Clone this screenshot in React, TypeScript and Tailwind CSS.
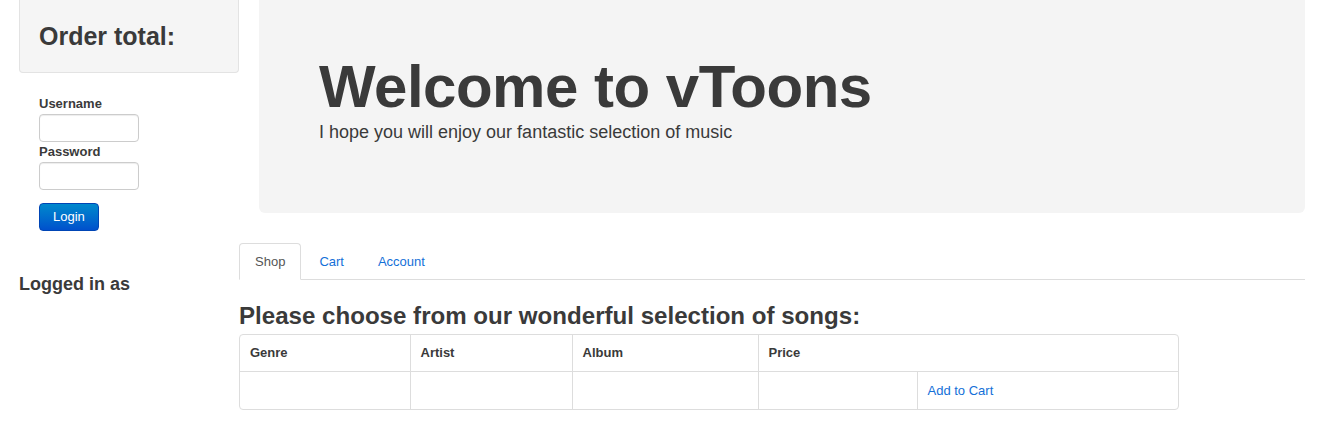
import React from 'react';

const font = { fontFamily: '"Liberation Sans", Arial, sans-serif' };

function Sidebar() {
  return (
    <div className="w-[220px] shrink-0">
      <div className="bg-[#f5f5f5] border border-t-0 border-[#e3e3e3] rounded-b-[4px] px-[19px] pt-[16px] pb-[16px]">
        <h3 className="text-[25px] leading-[40px] font-bold text-[#3a3a3a]">Order total:</h3>
      </div>

      <form className="pl-[20px] pt-[21px]">
        <label className="block text-[13px] leading-[20px] font-bold text-[#3a3a3a]">Username</label>
        <input className="block w-[100px] h-[28px] border border-[#ccc] rounded-[4px] bg-white shadow-[inset_0_1px_1px_rgba(0,0,0,0.075)]" />
        <label className="block text-[13px] leading-[20px] font-bold text-[#3a3a3a]">Password</label>
        <input type="password" className="block w-[100px] h-[28px] border border-[#ccc] rounded-[4px] bg-white shadow-[inset_0_1px_1px_rgba(0,0,0,0.075)]" />
        <button
          type="button"
          className="mt-[13px] h-[28px] px-[13px] text-[13px] leading-[20px] text-white rounded-[4px] border border-[#0045b5] bg-gradient-to-b from-[#0088cc] to-[#0050cc]"
        >
          Login
        </button>
      </form>

      <h4 className="mt-[43px] text-[18px] leading-[20px] font-bold text-[#3a3a3a]">Logged in as</h4>
    </div>
  );
}

function Hero() {
  return (
    <div className="ml-[20px] bg-[#f4f4f4] rounded-b-[6px] pl-[60px] pr-[60px] pt-[57px] pb-[66px]">
      <h1 className="text-[60px] leading-[60px] font-bold tracking-[-0.5px] text-[#3a3a3a]">Welcome to vToons</h1>
      <p className="text-[18px] leading-[30px] text-[#3a3a3a]">I hope you will enjoy our fantastic selection of music</p>
    </div>
  );
}

function Tabs() {
  return (
    <ul className="mt-[30px] flex border-b border-[#ddd] text-[13px] leading-[20px]">
      <li className="mr-[2px] -mb-px">
        <a className="block px-[15px] pt-[8px] pb-[7px] border border-[#ddd] border-b-white bg-white rounded-t-[4px] text-[#555]">Shop</a>
      </li>
      <li className="mr-[2px] -mb-px">
        <a className="block px-[15px] pt-[8px] pb-[7px] border border-transparent text-[#1470d8]">Cart</a>
      </li>
      <li className="mr-[2px] -mb-px">
        <a className="block px-[15px] pt-[8px] pb-[7px] border border-transparent text-[#1470d8]">Account</a>
      </li>
    </ul>
  );
}

function SongTable() {
  return (
    <div className="w-[940px] border border-[#ddd] rounded-[4px] overflow-hidden">
      <table className="w-full border-collapse text-[13px] leading-[20px] text-[#3a3a3a]">
        <colgroup>
          <col className="w-[170px]" />
          <col className="w-[162px]" />
          <col className="w-[186px]" />
          <col className="w-[159px]" />
          <col />
        </colgroup>
        <thead>
          <tr>
            <th className="text-left font-bold px-[10px] py-2">Genre</th>
            <th className="text-left font-bold px-[10px] py-2 border-l border-[#ddd]">Artist</th>
            <th className="text-left font-bold px-[10px] py-2 border-l border-[#ddd]">Album</th>
            <th colSpan={2} className="text-left font-bold px-[10px] py-2 border-l border-[#ddd]">Price</th>
          </tr>
        </thead>
        <tbody>
          <tr className="border-t border-[#ddd]">
            <td className="px-[10px] pt-[9px] pb-[7px] h-[37px]"></td>
            <td className="px-[10px] pt-[9px] pb-[7px] border-l border-[#ddd]"></td>
            <td className="px-[10px] pt-[9px] pb-[7px] border-l border-[#ddd]"></td>
            <td className="px-[10px] pt-[9px] pb-[7px] border-l border-[#ddd]"></td>
            <td className="px-[10px] pt-[9px] pb-[7px] border-l border-[#ddd]">
              <a className="text-[#1470d8]">Add to Cart</a>
            </td>
          </tr>
        </tbody>
      </table>
    </div>
  );
}

export default function App() {
  return (
    <div style={font} className="min-h-[448px] bg-white flex pl-[19px] pr-[16px]">
      <Sidebar />
      <div className="flex-1">
        <Hero />
        <Tabs />
        <h3 className="mt-[21px] mb-[3px] text-[24.1px] leading-[30px] font-bold text-[#3a3a3a]">
          Please choose from our wonderful selection of songs:
        </h3>
        <SongTable />
      </div>
    </div>
  );
}
